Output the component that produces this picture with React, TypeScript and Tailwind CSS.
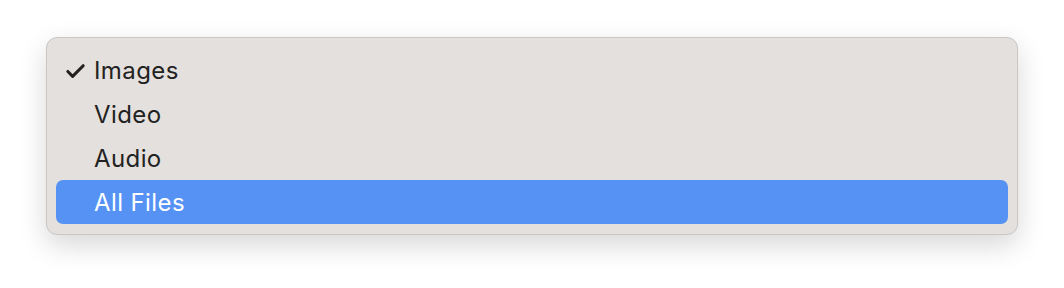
import { Check } from "lucide-react";

const items = ["Images", "Video", "Audio", "All Files"];

export default function App() {
  const selected = "Images";
  const active = "All Files";

  return (
    <div className="h-[288px] w-[1064px] bg-white pl-[46px] pt-[37px]" style={{ fontFamily: "Inter, 'Noto Sans', sans-serif" }}>
      <div className="w-[972px] rounded-[11px] border border-[#c9c6c3] bg-[#e4e0dd] px-[9px] pb-[10px] pt-[10px] shadow-[0_10px_28px_rgba(0,0,0,0.16)]">
        {items.map((item) => (
          <div
            key={item}
            className={
              "flex h-[44px] items-center rounded-[7px] pl-[8px] pt-[2px] text-[24px] " +
              (item === active ? "bg-[#5592f4] text-white" : "text-[#222]")
            }
          >
            <span className="flex w-[30px] items-center">
              {item === selected && <Check size={23} strokeWidth={3.2} className="text-[#222]" />}
            </span>
            <span className="tracking-[0.4px]">{item}</span>
          </div>
        ))}
      </div>
    </div>
  );
}
